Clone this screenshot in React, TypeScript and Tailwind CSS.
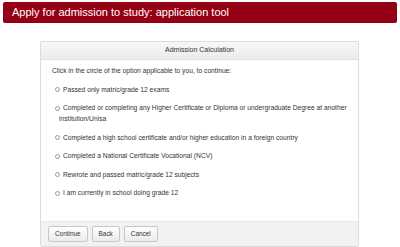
const options = [
  'Passed only matric/grade 12 exams',
  'Completed or completing any Higher Certificate or Diploma or undergraduate Degree at another institution/Unisa',
  'Completed a high school certificate and/or higher education in a foreign country',
  'Completed a National Certificate Vocational (NCV)',
  'Rewrote and passed matric/grade 12 subjects',
  'I am currently in school doing grade 12',
]

export default function App() {
  return (
    <div className="w-[400px] h-[247px] bg-white overflow-hidden font-['Liberation_Sans',Arial,sans-serif] text-[#333]">
      <div className="mx-[3px] mt-[2px] h-[21px] rounded-[2px] bg-[#950014] flex items-center pl-[9px]">
        <h1 className="text-white text-[11px] leading-none">Apply for admission to study: application tool</h1>
      </div>

      <div className="ml-[40px] mt-[18px] w-[319px] h-[206px] border border-[#dcdcdc] rounded-[2px] flex flex-col">
        <div className="h-[18px] shrink-0 border-b border-[#e0e0e0] bg-gradient-to-b from-[#f7f7f7] to-[#ececec] flex items-center justify-center text-[7px]">
          Admission Calculation
        </div>

        <div className="flex-1 pl-[11px] pr-[6px] pt-[5px] text-[6.7px] leading-[11px]">
          <p className="mb-[7.5px]">Click in the circle of the option applicable to you, to continue:</p>
          {options.map(o => (
            <label key={o} className="block pl-[7px] mb-[7.5px]">
              <span className="inline-block w-[5px] h-[5px] -ml-[4px] mr-[3px] rounded-full border border-[#999] bg-white align-[-0.5px]" />
              {o}
            </label>
          ))}
        </div>

        <div className="h-[25px] shrink-0 border-t border-[#e6e6e6] bg-[#f2f2f2] flex items-center gap-[4px] pl-[7px]">
          {['Continue', 'Back', 'Cancel'].map(b => (
            <button
              key={b}
              className="h-[16px] px-[6px] rounded-[2px] border border-[#c8c8c8] bg-gradient-to-b from-white to-[#ebebeb] text-[6.4px] text-[#333]"
            >
              {b}
            </button>
          ))}
        </div>
      </div>
    </div>
  )
}
